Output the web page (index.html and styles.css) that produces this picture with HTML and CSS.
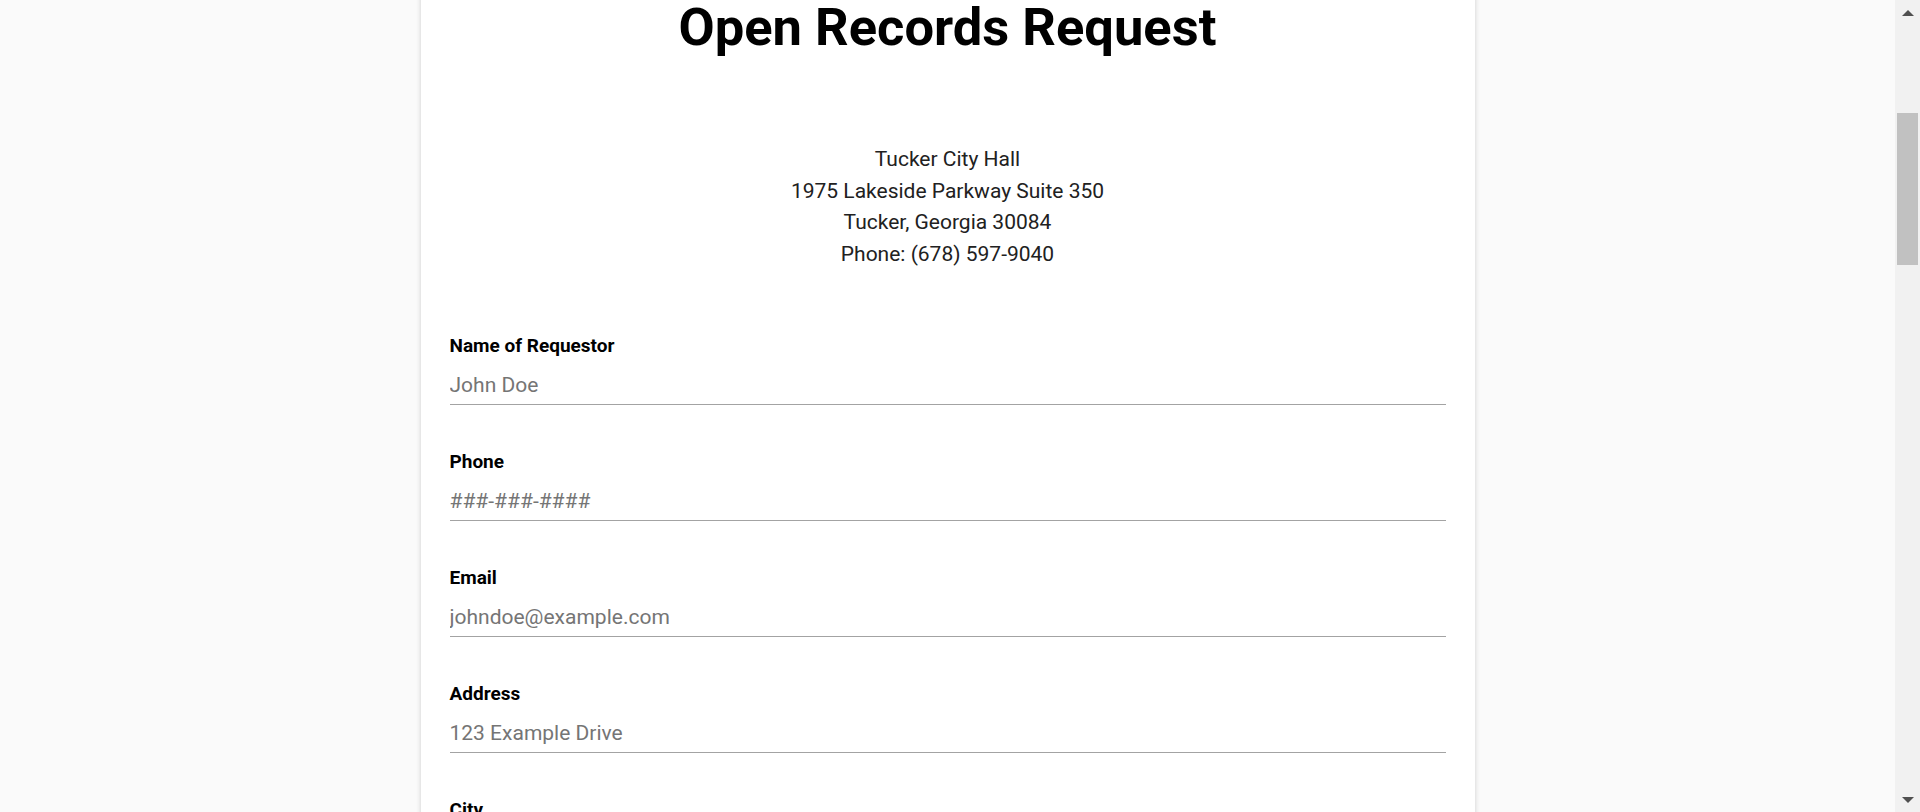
FILE: index.html
```html
<!DOCTYPE html>
<html lang="en">
<head>
<meta charset="utf-8">
<title>Open Records Request</title>
<link rel="stylesheet" href="styles.css">
</head>
<body>
<div class="page">
  <main class="viewport">
    <section class="card">
      <h1 class="title">Open Records Request</h1>
      <div class="address">
        <div>Tucker City Hall</div>
        <div>1975 Lakeside Parkway Suite 350</div>
        <div>Tucker, Georgia 30084</div>
        <div>Phone: (678) 597-9040</div>
      </div>
      <form class="form">
        <div class="field">
          <label class="label" for="name">Name of Requestor</label>
          <input class="input" id="name" type="text" placeholder="John Doe">
        </div>
        <div class="field">
          <label class="label" for="phone">Phone</label>
          <input class="input" id="phone" type="text" placeholder="###-###-####">
        </div>
        <div class="field">
          <label class="label" for="email">Email</label>
          <input class="input" id="email" type="text" placeholder="johndoe@example.com">
        </div>
        <div class="field">
          <label class="label" for="address">Address</label>
          <input class="input" id="address" type="text" placeholder="123 Example Drive">
        </div>
        <div class="field">
          <label class="label" for="city">City</label>
          <input class="input" id="city" type="text" placeholder="Tucker">
        </div>
        <div class="field">
          <label class="label" for="state">State</label>
          <input class="input" id="state" type="text" placeholder="GA">
        </div>
        <div class="field">
          <label class="label" for="zip">Zip</label>
          <input class="input" id="zip" type="text" placeholder="30084">
        </div>
      </form>
    </section>
  </main>
  <div class="scrollbar">
    <div class="sb-button"><span class="arrow-up"></span></div>
    <div class="sb-track"><div class="sb-thumb"></div></div>
    <div class="sb-button"><span class="arrow-down"></span></div>
  </div>
</div>
</body>
</html>
```
FILE: styles.css
```css
* { box-sizing: border-box; }
html, body { margin: 0; padding: 0; height: 100%; }
body {
  font-family: Roboto, "Liberation Sans", Arial, sans-serif;
  color: #000;
  overflow: hidden;
}
.page {
  display: flex;
  height: 812px;
  overflow: hidden;
}
.viewport {
  flex: 1;
  background: #fafafa;
  overflow: hidden;
}
.card {
  width: 1054px;
  margin: -6px auto 0;
  background: #fff;
  box-shadow: 0 0 5px rgba(0, 0, 0, 0.18);
  padding: 0 29px 40px;
  min-height: 1400px;
}
.title {
  margin: 0;
  text-align: center;
  font-size: 52.5px;
  line-height: 66px;
  font-weight: 700;
  color: #000;
}
.address {
  margin-top: 84px;
  text-align: center;
  font-size: 21px;
  line-height: 31.5px;
  color: #212121;
}
.form {
  margin-top: 63px;
}
.field {
  display: flex;
  flex-direction: column;
  margin-bottom: 44px;
}
.label {
  font-size: 19px;
  line-height: 26px;
  font-weight: 700;
  color: #000;
}
.input {
  margin-top: 6px;
  height: 40px;
  border: none;
  border-bottom: 1px solid #a3a3a3;
  padding: 0;
  font-family: Roboto, "Liberation Sans", Arial, sans-serif;
  font-size: 21px;
  color: #212121;
  background: transparent;
  outline: none;
}
.input::placeholder { color: #757575; }
.scrollbar {
  width: 25px;
  display: flex;
  flex-direction: column;
  background: #f1f1f1;
}
.sb-button {
  height: 25px;
  display: flex;
  align-items: center;
  justify-content: center;
}
.arrow-up {
  width: 0; height: 0;
  border-left: 6px solid transparent;
  border-right: 6px solid transparent;
  border-bottom: 6px solid #505050;
}
.arrow-down {
  width: 0; height: 0;
  border-left: 6px solid transparent;
  border-right: 6px solid transparent;
  border-top: 6px solid #505050;
}
.sb-track {
  flex: 1;
  padding: 88px 2px 0;
}
.sb-thumb {
  height: 152px;
  background: #c1c1c1;
}
```
